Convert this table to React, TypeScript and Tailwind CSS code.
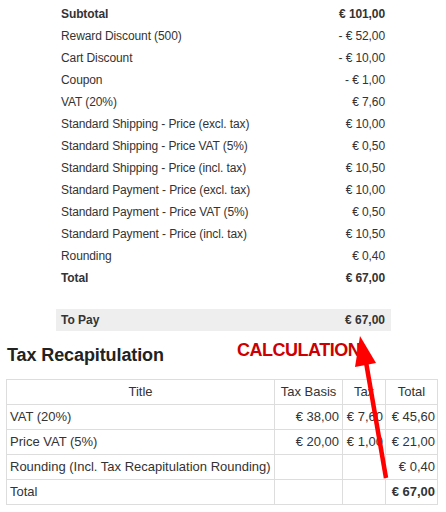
import React from "react";

const rows: { label: string; value: string; bold?: boolean }[] = [
  { label: "Subtotal", value: "€ 101,00", bold: true },
  { label: "Reward Discount (500)", value: "- € 52,00" },
  { label: "Cart Discount", value: "- € 10,00" },
  { label: "Coupon", value: "- € 1,00" },
  { label: "VAT (20%)", value: "€ 7,60" },
  { label: "Standard Shipping - Price (excl. tax)", value: "€ 10,00" },
  { label: "Standard Shipping - Price VAT (5%)", value: "€ 0,50" },
  { label: "Standard Shipping - Price (incl. tax)", value: "€ 10,50" },
  { label: "Standard Payment - Price (excl. tax)", value: "€ 10,00" },
  { label: "Standard Payment - Price VAT (5%)", value: "€ 0,50" },
  { label: "Standard Payment - Price (incl. tax)", value: "€ 10,50" },
  { label: "Rounding", value: "€ 0,40" },
  { label: "Total", value: "€ 67,00", bold: true },
];

const tax = [
  ["VAT (20%)", "€ 38,00", "€ 7,60", "€ 45,60"],
  ["Price VAT (5%)", "€ 20,00", "€ 1,00", "€ 21,00"],
  ["Rounding (Incl. Tax Recapitulation Rounding)", "", "", "€ 0,40"],
];

export default function App() {
  return (
    <div
      className="relative w-[446px] h-[512px] bg-white text-[#333]"
      style={{ fontFamily: '"Liberation Sans", Arial, sans-serif' }}
    >
      <div className="ml-[56px] w-[335px] pt-[3px]">
        {rows.map((r) => (
          <div
            key={r.label}
            className={`flex justify-between items-center h-[22px] px-[5px] text-[12px] tracking-[-0.1px] ${r.bold ? "font-bold" : ""}`}
          >
            <span>{r.label}</span>
            <span className="pr-px">{r.value}</span>
          </div>
        ))}
        <div className="h-[20px]" />
        <div className="flex justify-between items-center h-[22px] px-[5px] text-[12px] font-bold bg-[#eeeeee]">
          <span>To Pay</span>
          <span className="pr-px">€ 67,00</span>
        </div>
      </div>

      <div className="flex items-center h-[48px] pl-[7px]">
        <h2 className="text-[18px] font-bold text-[#222] leading-none tracking-[-0.1px]">Tax Recapitulation</h2>
      </div>

      <table className="ml-[6px] border-collapse text-[13px] w-[431px] table-fixed">
        <colgroup>
          <col className="w-[268px]" />
          <col className="w-[68px]" />
          <col className="w-[43px]" />
          <col className="w-[52px]" />
        </colgroup>
        <thead>
          <tr className="h-[25px]">
            <th className="border border-[#dddddd] font-normal text-center px-[3px]">Title</th>
            <th className="border border-[#dddddd] font-normal text-center px-[3px] whitespace-nowrap">Tax Basis</th>
            <th className="border border-[#dddddd] font-normal text-center px-[3px] whitespace-nowrap overflow-hidden">Tax</th>
            <th className="border border-[#dddddd] font-normal text-center px-[3px]">Total</th>
          </tr>
        </thead>
        <tbody>
          {tax.map((t) => (
            <tr key={t[0]} className="h-[25px]">
              <td className="border border-[#dddddd] px-[3px] whitespace-nowrap">{t[0]}</td>
              <td className="border border-[#dddddd] px-[3px] text-right whitespace-nowrap">{t[1]}</td>
              <td className="border border-[#dddddd] px-[2px] text-right whitespace-nowrap">{t[2]}</td>
              <td className="border border-[#dddddd] px-[2px] text-right whitespace-nowrap">{t[3]}</td>
            </tr>
          ))}
          <tr className="h-[25px]">
            <td className="border border-[#dddddd] px-[3px]">Total</td>
            <td className="border border-[#dddddd] px-[3px]"></td>
            <td className="border border-[#dddddd] px-[3px]"></td>
            <td className="border border-[#dddddd] px-[2px] text-right font-bold whitespace-nowrap">€ 67,00</td>
          </tr>
        </tbody>
      </table>

      <div className="absolute left-[237px] top-[341px] text-[18px] font-bold text-[#cc0000] leading-none tracking-[-0.5px]">
        CALCULATION
      </div>
      <svg className="absolute left-0 top-0 pointer-events-none" width="446" height="512">
        <line x1="386" y1="478" x2="366" y2="362" stroke="#ff0000" strokeWidth="4.5" />
        <polygon points="360,336 355,367 376,363" fill="#ff0000" />
      </svg>
    </div>
  );
}
